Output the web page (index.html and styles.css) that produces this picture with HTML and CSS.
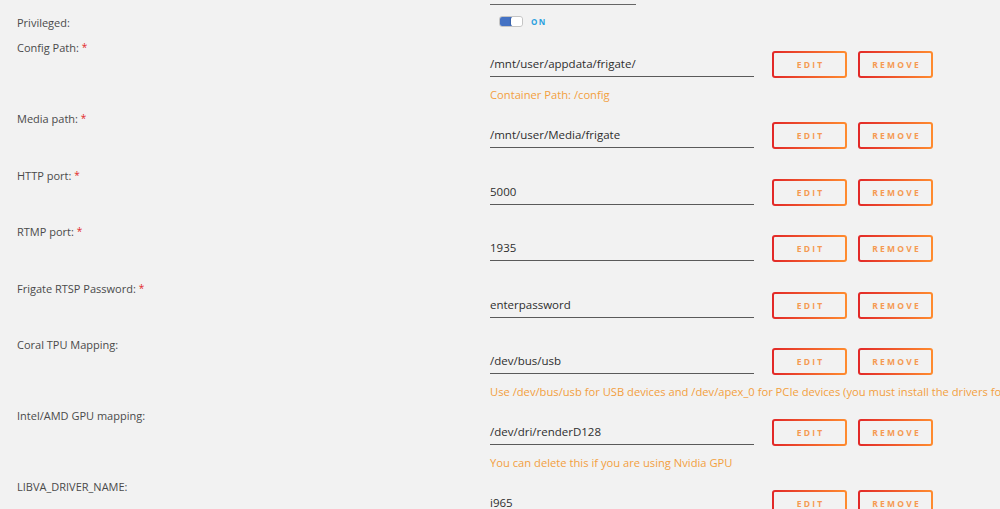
FILE: index.html
```html
<!DOCTYPE html>
<html>
<head>
<meta charset="utf-8">
<link rel="stylesheet" href="styles.css">
</head>
<body>
<div class="form">
  <div class="row prev">
    <div class="label"></div>
    <div class="content"><div class="select-line"></div></div>
  </div>
  <div class="row priv">
    <div class="label">Privileged:</div>
    <div class="content">
      <div class="switch"><span class="track"><span class="fill"></span><span class="knob"></span></span><span class="state">ON</span></div>
    </div>
  </div>
  <div class="row hinted">
    <div class="label">Config Path: <span class="req">*</span></div>
    <div class="content">
      <div class="controls"><div class="field">/mnt/user/appdata/frigate/</div><button class="btn">EDIT</button><button class="btn">REMOVE</button></div>
      <div class="hint">Container Path: /config</div>
    </div>
  </div>
  <div class="row">
    <div class="label">Media path: <span class="req">*</span></div>
    <div class="content">
      <div class="controls"><div class="field">/mnt/user/Media/frigate</div><button class="btn">EDIT</button><button class="btn">REMOVE</button></div>
    </div>
  </div>
  <div class="row">
    <div class="label">HTTP port: <span class="req">*</span></div>
    <div class="content">
      <div class="controls"><div class="field">5000</div><button class="btn">EDIT</button><button class="btn">REMOVE</button></div>
    </div>
  </div>
  <div class="row">
    <div class="label">RTMP port: <span class="req">*</span></div>
    <div class="content">
      <div class="controls"><div class="field">1935</div><button class="btn">EDIT</button><button class="btn">REMOVE</button></div>
    </div>
  </div>
  <div class="row">
    <div class="label">Frigate RTSP Password: <span class="req">*</span></div>
    <div class="content">
      <div class="controls"><div class="field">enterpassword</div><button class="btn">EDIT</button><button class="btn">REMOVE</button></div>
    </div>
  </div>
  <div class="row hinted">
    <div class="label">Coral TPU Mapping:</div>
    <div class="content">
      <div class="controls"><div class="field">/dev/bus/usb</div><button class="btn">EDIT</button><button class="btn">REMOVE</button></div>
      <div class="hint">Use /dev/bus/usb for USB devices and /dev/apex_0 for PCIe devices (you must install the drivers for your Coral device)</div>
    </div>
  </div>
  <div class="row hinted">
    <div class="label">Intel/AMD GPU mapping:</div>
    <div class="content">
      <div class="controls"><div class="field">/dev/dri/renderD128</div><button class="btn">EDIT</button><button class="btn">REMOVE</button></div>
      <div class="hint">You can delete this if you are using Nvidia GPU</div>
    </div>
  </div>
  <div class="row">
    <div class="label">LIBVA_DRIVER_NAME:</div>
    <div class="content">
      <div class="controls"><div class="field">i965</div><button class="btn">EDIT</button><button class="btn">REMOVE</button></div>
    </div>
  </div>
</div>
</body>
</html>
```

FILE: styles.css
```css
html, body {
  margin: 0;
  padding: 0;
  overflow: hidden;
  background: #f2f2f2;
}

body {
  font-family: "Open Sans", "Liberation Sans", sans-serif;
  color: #333;
}

.form {
  width: 1000px;
}

.row {
  display: flex;
}

.label {
  flex: none;
  width: 490px;
  box-sizing: border-box;
  padding-left: 17px;
  font-size: 11px;
  line-height: 14px;
  color: #4a4a4a;
  white-space: nowrap;
}

.req {
  color: #e22828;
  font-size: 10px;
  vertical-align: top;
  line-height: 12px;
}

.content {
  flex: 1;
  min-width: 0;
  padding-top: 10px;
  padding-bottom: 19.5px;
}

.row.hinted .content {
  padding-bottom: 10px;
}

/* previous (cut-off) row */
.row.prev .content {
  padding: 0;
}

.select-line {
  width: 146px;
  height: 4px;
  border-bottom: 1px solid #666;
}

.row.priv {
  margin-top: 11px;
  height: 25px;
}

.row.priv .content {
  padding: 0;
}

.switch {
  display: flex;
  align-items: center;
  height: 11px;
  padding-left: 9px;
}

.track {
  position: relative;
  display: block;
  width: 24px;
  height: 11px;
  box-sizing: border-box;
  border: 1px solid #c4c4c4;
  border-radius: 3px;
  background: #fff;
  overflow: hidden;
}

.fill {
  position: absolute;
  left: 0;
  top: 0;
  bottom: 0;
  width: 12px;
  background: #4472c4;
}

.knob {
  position: absolute;
  right: 0;
  top: 0;
  bottom: 0;
  width: 11px;
  background: #fff;
  border-radius: 2px;
  box-shadow: -1px 0 1px rgba(0, 0, 0, 0.15);
}

.state {
  margin-left: 8px;
  font-size: 8px;
  font-weight: 700;
  letter-spacing: 1.5px;
  color: #2ba0df;
}

.controls {
  display: flex;
  align-items: flex-start;
}

.field {
  flex: none;
  width: 264px;
  height: 25px;
  border-bottom: 1px solid #5a5a5a;
  font-size: 11.5px;
  line-height: 25px;
  color: #2e2e2e;
  white-space: nowrap;
  margin-right: 18px;
}

.btn {
  flex: none;
  width: 75px;
  height: 27px;
  box-sizing: border-box;
  padding: 0;
  border: 2px solid transparent;
  border-radius: 3px;
  background:
    linear-gradient(#f2f2f2, #f2f2f2) padding-box,
    linear-gradient(90deg, #e22828, #ff8c2f) border-box;
  font-family: "Open Sans", "Liberation Sans", sans-serif;
  font-size: 8.5px;
  font-weight: 700;
  letter-spacing: 2.2px;
  text-indent: 2.2px;
  color: #f59a52;
  display: flex;
  align-items: center;
  justify-content: center;
}

.btn + .btn {
  margin-left: 11px;
}

.hint {
  margin-top: 9.5px;
  font-size: 11.2px;
  line-height: 14.5px;
  color: #f2a03e;
  white-space: nowrap;
}
```
